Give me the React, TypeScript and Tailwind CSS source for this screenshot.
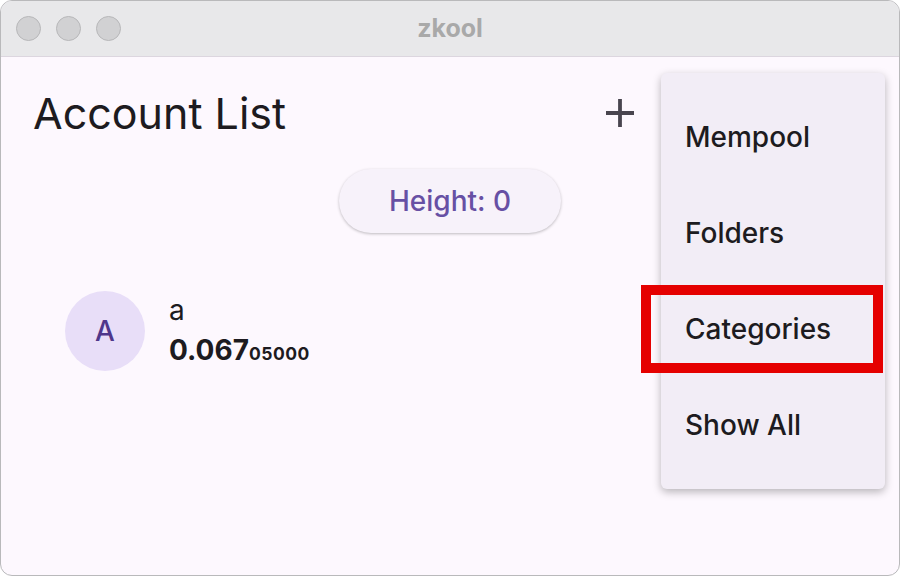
const items = ["Mempool", "Folders", "Categories", "Show All"];

function AddIcon() {
  return (
    <svg width="32" height="32" viewBox="0 0 32 32" className="text-[#49454f]">
      <path d="M16 2v28M2 16h28" stroke="currentColor" strokeWidth="3.8" fill="none" />
    </svg>
  );
}

export default function App() {
  return (
    <div className="w-[900px] h-[576px] bg-white" style={{ fontFamily: "Inter, 'Noto Sans', sans-serif" }}>
      <div className="relative w-full h-full rounded-[12px] overflow-hidden border border-[#b9b9bb] bg-[#fdf8fe] flex flex-col">
        {/* title bar */}
        <div className="relative h-[56px] shrink-0 bg-[#e8e8ea] border-b border-[#dcd6df] flex items-center px-[15px] gap-[15px]">
          <span className="w-[25px] h-[25px] rounded-full bg-[#d1d1d3] border border-[#b7b7b9]" />
          <span className="w-[25px] h-[25px] rounded-full bg-[#d1d1d3] border border-[#b7b7b9]" />
          <span className="w-[25px] h-[25px] rounded-full bg-[#d1d1d3] border border-[#b7b7b9]" />
          <div className="absolute inset-0 flex items-center justify-center text-[25px] font-bold text-[#a9a9a9]">
            zkool
          </div>
        </div>

        {/* content */}
        <div className="flex-1 flex flex-col">
          <div className="flex items-center h-[112px] pl-[32px] pr-[263px]">
            <h1 className="flex-1 text-[43px] text-[#1d1b20]">Account List</h1>
            <AddIcon />
          </div>
          <div className="flex justify-center">
            <button className="w-[222px] h-[64px] rounded-full bg-[#f7f2fa] shadow-[0_1px_3px_rgba(0,0,0,0.25)] text-[28px] font-medium text-[#6750a4]">
              Height: 0
            </button>
          </div>
          <div className="flex items-center gap-[24px] pl-[64px] mt-[55px]">
            <div className="w-[80px] h-[80px] rounded-full bg-[#e8def8] flex items-center justify-center text-[28px] font-medium text-[#4f378b]">
              A
            </div>
            <div className="flex flex-col mt-[2px]">
              <span className="text-[28px] text-[#1d1b20] leading-[40px]">a</span>
              <span className="text-[#1d1b20] font-bold leading-[40px]">
                <span className="text-[28px]">0.067</span>
                <span className="text-[17.5px] tracking-[0.5px]">05000</span>
              </span>
            </div>
          </div>
        </div>

        {/* popup menu */}
        <div className="absolute left-[660px] top-[72px] w-[224px] h-[416px] rounded-[6px] bg-[#f2edf6] shadow-[0_3px_8px_rgba(0,0,0,0.28)] flex flex-col py-[16px]">
          {items.map((t) => (
            <div key={t} className="h-[96px] shrink-0 flex items-center pl-[24px] text-[28px] font-medium text-[#1d1b20]">
              {t}
            </div>
          ))}
        </div>

        {/* highlight */}
        <div className="absolute left-[640px] top-[284px] w-[242px] h-[88px] border-[10px] border-[#e50000]" />
      </div>
    </div>
  );
}
